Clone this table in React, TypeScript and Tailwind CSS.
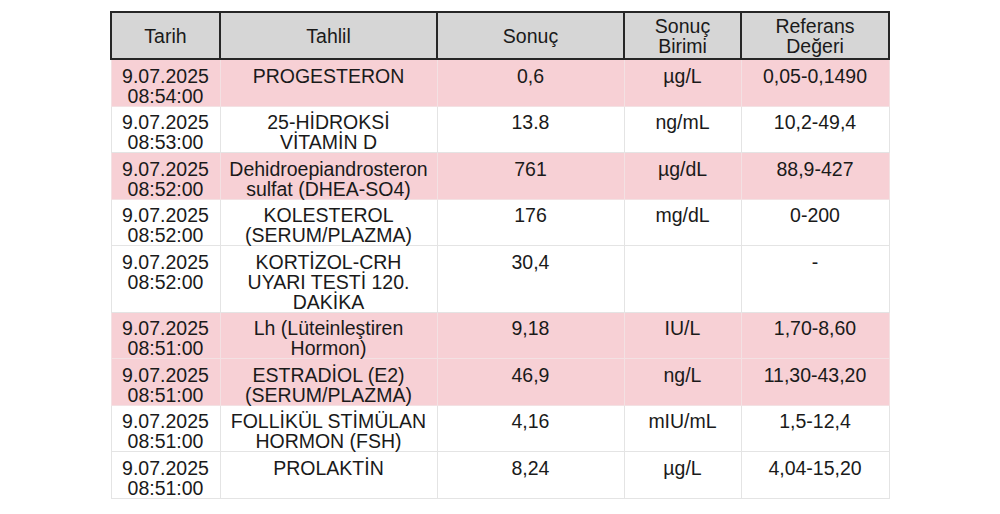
const rows = [
  { date: '9.07.2025', time: '08:54:00', test: ['PROGESTERON'], result: '0,6', unit: 'µg/L', ref: '0,05-0,1490', flag: true },
  { date: '9.07.2025', time: '08:53:00', test: ['25-HİDROKSİ', 'VİTAMİN D'], result: '13.8', unit: 'ng/mL', ref: '10,2-49,4', flag: false },
  { date: '9.07.2025', time: '08:52:00', test: ['Dehidroepiandrosteron', 'sulfat (DHEA-SO4)'], result: '761', unit: 'µg/dL', ref: '88,9-427', flag: true },
  { date: '9.07.2025', time: '08:52:00', test: ['KOLESTEROL', '(SERUM/PLAZMA)'], result: '176', unit: 'mg/dL', ref: '0-200', flag: false },
  { date: '9.07.2025', time: '08:52:00', test: ['KORTİZOL-CRH', 'UYARI TESTİ 120.', 'DAKİKA'], result: '30,4', unit: '', ref: '-', flag: false },
  { date: '9.07.2025', time: '08:51:00', test: ['Lh (Lüteinleştiren', 'Hormon)'], result: '9,18', unit: 'IU/L', ref: '1,70-8,60', flag: true },
  { date: '9.07.2025', time: '08:51:00', test: ['ESTRADİOL (E2)', '(SERUM/PLAZMA)'], result: '46,9', unit: 'ng/L', ref: '11,30-43,20', flag: true },
  { date: '9.07.2025', time: '08:51:00', test: ['FOLLİKÜL STİMÜLAN', 'HORMON (FSH)'], result: '4,16', unit: 'mIU/mL', ref: '1,5-12,4', flag: false },
  { date: '9.07.2025', time: '08:51:00', test: ['PROLAKTİN'], result: '8,24', unit: 'µg/L', ref: '4,04-15,20', flag: false },
];

const th = 'border-2 border-[#262626] bg-[#d6d6d6] h-[47px] p-0 align-middle text-center font-normal leading-[20px]';

export default function App() {
  return (
    <div className="min-h-screen bg-white pt-[11px] font-['Liberation_Sans',Arial,sans-serif] text-[19.5px] text-[#1a1a1a]">
      <table className="mx-auto w-[778px] table-fixed border-collapse">
        <colgroup>
          <col className="w-[109px]" />
          <col className="w-[217px]" />
          <col className="w-[187px]" />
          <col className="w-[117px]" />
          <col className="w-[148px]" />
        </colgroup>
        <thead>
          <tr>
            <th className={th}>Tarih</th>
            <th className={th}>Tahlil</th>
            <th className={th}>Sonuç</th>
            <th className={th}>
              Sonuç
              <br />
              Birimi
            </th>
            <th className={th}>
              Referans
              <br />
              Değeri
            </th>
          </tr>
        </thead>
        <tbody>
          {rows.map((r, i) => {
            const td = r.flag
              ? 'border border-[#f3e1e3] bg-[#f7d0d5] px-0.5 pt-[5.5px] pb-0 align-top text-center leading-[20px]'
              : 'border border-[#e4e4e4] bg-white px-0.5 pt-[5.5px] pb-0 align-top text-center leading-[20px]';
            return (
              <tr key={i}>
                <td className={td}>
                  {r.date}
                  <br />
                  {r.time}
                </td>
                <td className={td}>
                  {r.test.map((t, j) => (
                    <div key={j} className="whitespace-nowrap">{t}</div>
                  ))}
                </td>
                <td className={td}>{r.result}</td>
                <td className={td}>{r.unit}</td>
                <td className={td}>{r.ref}</td>
              </tr>
            );
          })}
        </tbody>
      </table>
    </div>
  );
}
